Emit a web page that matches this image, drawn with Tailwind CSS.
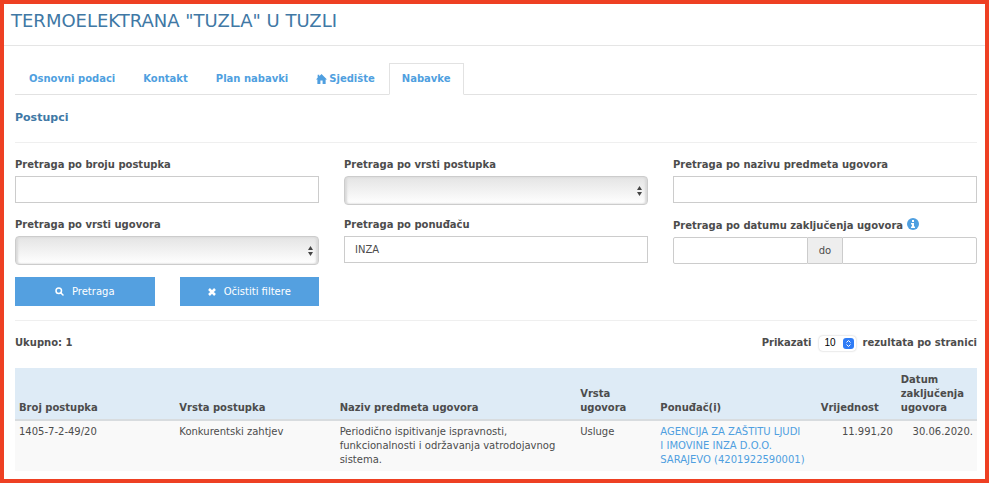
<!DOCTYPE html>
<html lang="bs">
<head>
    <meta charset="UTF-8">
    <meta name="viewport" content="width=device-width, initial-scale=1.0">
    <title>Termoelektrana "Tuzla" u Tuzli - Nabavke</title>
    <script src="https://cdn.jsdelivr.net/npm/@tailwindcss/browser@4"></script>
</head>
<body class="bg-white font-['Verdana','DejaVu_Sans',sans-serif] text-[10px] leading-[14px] text-[#4c4c4c]">

    <div class="min-h-screen mr-px border-4 border-[#ee4023]">
        <header class="px-[7px] pt-[2px] pb-[10px] border-b border-[#e5e5e5]">
            <h1 class="text-[18px] leading-[29px] text-[#4078a5]">TERMOELEKTRANA "TUZLA" U TUZLI</h1>
        </header>

        <main class="pl-[11px] pr-2 pt-[17px] pb-2">
            <nav class="flex border-b border-[#e2e2e2] font-bold text-[#4f9fe0]">
                <a href="#" class="px-[13px] pt-2 pb-[7px] border border-transparent">Osnovni podaci</a>
                <a href="#" class="px-[13px] pt-2 pb-[7px] border border-transparent">Kontakt</a>
                <a href="#" class="px-[13px] pt-2 pb-[7px] border border-transparent">Plan nabavki</a>
                <a href="#" class="px-[13px] pt-2 pb-[7px] border border-transparent flex items-center gap-[2px]">
                    <svg class="w-[11px] h-[11px]" viewBox="0 0 20 20" fill="currentColor"><path d="M10 0L20 10H17.500V18H12V12H8V18H2.500V10H0L3 7V1.500H6V4Z"/></svg>
                    Sjedište
                </a>
                <a href="#" class="px-3 pt-2 pb-[7px] -mb-px border border-b-white border-[#e2e2e2] bg-white">Nabavke</a>
            </nav>

            <h2 class="pt-4 pb-[17px] text-[11px] font-bold text-[#4078a5] border-b border-[#efefef]">Postupci</h2>

            <form class="pt-[15px]" onsubmit="return false">
                <div class="grid grid-cols-3 gap-x-[25px] gap-y-[13px]">
                    <div>
                        <label for="broj" class="block mb-1 font-bold">Pretraga po broju postupka</label>
                        <input id="broj" type="text" class="block w-full h-[27px] px-[10px] border border-[#cccccc]">
                    </div>
                    <div>
                        <label for="vrstaPostupka" class="block mb-1 font-bold">Pretraga po vrsti postupka</label>
                        <div class="relative">
                            <select id="vrstaPostupka" class="block w-full h-[29px] appearance-none rounded border border-[#cccccc] bg-linear-to-b from-[#e4e4e4] to-white shadow-[inset_2px_0_2px_#dadada,inset_-2px_0_2px_#dadada]"><option></option></select>
                            <svg class="absolute right-[6px] top-[10px] w-[5px] h-[10px] pointer-events-none" viewBox="0 0 5 10" fill="#444444"><path d="M2.500 0L5 4H0ZM0 6H5L2.500 10Z"/></svg>
                        </div>
                    </div>
                    <div>
                        <label for="naziv" class="block mb-1 font-bold">Pretraga po nazivu predmeta ugovora</label>
                        <input id="naziv" type="text" class="block w-full h-[27px] px-[10px] border border-[#cccccc]">
                    </div>
                    <div>
                        <label for="vrstaUgovora" class="block mb-1 font-bold">Pretraga po vrsti ugovora</label>
                        <div class="relative">
                            <select id="vrstaUgovora" class="block w-full h-[29px] appearance-none rounded border border-[#cccccc] bg-linear-to-b from-[#e4e4e4] to-white shadow-[inset_2px_0_2px_#dadada,inset_-2px_0_2px_#dadada]"><option></option></select>
                            <svg class="absolute right-[6px] top-[10px] w-[5px] h-[10px] pointer-events-none" viewBox="0 0 5 10" fill="#444444"><path d="M2.500 0L5 4H0ZM0 6H5L2.500 10Z"/></svg>
                        </div>
                    </div>
                    <div>
                        <label for="ponudjac" class="block mb-1 font-bold">Pretraga po ponuđaču</label>
                        <input id="ponudjac" type="text" value="INZA" class="block w-full h-[27px] px-[10px] border border-[#cccccc]">
                    </div>
                    <div>
                        <div class="flex gap-1 mb-1 h-[15px]">
                            <label for="datumOd" class="font-bold pt-px">Pretraga po datumu zaključenja ugovora</label>
                            <svg class="w-3 h-3 shrink-0" viewBox="0 0 12 12"><circle cx="6" cy="6" r="6" fill="#4f9fe0"/><path d="M5 2H7V4H5ZM4 5H7V8.500H8V10H4V8.500H5V6.500H4Z" fill="white"/></svg>
                        </div>
                        <div class="flex h-[27px]">
                            <input id="datumOd" type="text" class="flex-1 min-w-0 px-[10px] border border-[#cccccc] rounded-l-xs">
                            <span class="w-[34px] flex items-center justify-center border-y border-[#cccccc] bg-[#eeeeee]">do</span>
                            <input id="datumDo" type="text" aria-label="Datum do" class="flex-1 min-w-0 px-[10px] border border-[#cccccc] rounded-r-xs">
                        </div>
                    </div>
                </div>

                <div class="grid grid-cols-3 gap-x-[25px] pt-3 pb-[14px] border-b border-[#efefef]">
                    <div class="grid grid-cols-2 gap-x-[25px] text-white">
                        <button type="submit" class="h-[29px] flex items-center justify-center gap-2 bg-[#54a0e0]">
                            <svg class="w-[9px] h-[9px]" viewBox="0 0 18 18" fill="none" stroke="currentColor" stroke-width="3"><circle cx="7.500" cy="7.500" r="5.500"/><path d="M11.500 11.500L16 16" stroke-linecap="round"/></svg>
                            Pretraga
                        </button>
                        <button type="reset" class="h-[29px] flex items-center justify-center gap-2 bg-[#54a0e0]">
                            <svg class="w-2 h-2" viewBox="0 0 16 16" stroke="currentColor" stroke-width="5"><path d="M2 2L14 14M14 2L2 14"/></svg>
                            Očistiti filtere
                        </button>
                    </div>
                </div>
            </form>

            <div class="flex items-center justify-between h-[14px] mt-[15px] mb-[18px] font-bold">
                <p>Ukupno: 1</p>
                <div class="flex items-center gap-[7px]">
                    <label for="poStranici">Prikazati</label>
                    <div class="relative">
                        <select id="poStranici" class="block w-[37px] h-[15px] pl-[6px] appearance-none rounded-sm bg-white font-['Liberation_Sans',sans-serif] font-normal text-[10px] text-black shadow-[0_0_2px_#bbbbbb]"><option>10</option></select>
                        <svg class="absolute right-[2px] top-[2px] w-[11px] h-[11px] pointer-events-none" viewBox="0 0 11 11" fill="none" stroke="white"><rect width="11" height="11" rx="3" fill="#2f7cf6" stroke="none"/><path d="M3.500 4.500L5.500 2.500L7.500 4.500M3.500 6.500L5.500 8.500L7.500 6.500"/></svg>
                    </div>
                    <span>rezultata po stranici</span>
                </div>
            </div>

            <table class="w-full table-fixed text-left">
                <colgroup>
                    <col class="w-2/12"><col class="w-2/12"><col class="w-3/12"><col class="w-1/12"><col class="w-2/12"><col class="w-1/12"><col class="w-1/12">
                </colgroup>
                <thead class="bg-[#deebf6] align-bottom border-b-2 border-[#d8dcdf]">
                    <tr>
                        <th class="px-1 pt-[5px] pb-1">Broj postupka</th>
                        <th class="px-1 pt-[5px] pb-1">Vrsta postupka</th>
                        <th class="px-1 pt-[5px] pb-1">Naziv predmeta ugovora</th>
                        <th class="px-1 pt-[5px] pb-1">Vrsta ugovora</th>
                        <th class="px-1 pt-[5px] pb-1">Ponuđač(i)</th>
                        <th class="px-1 pt-[5px] pb-1">Vrijednost</th>
                        <th class="px-1 pt-[5px] pb-1">Datum zaključenja ugovora</th>
                    </tr>
                </thead>
                <tbody class="bg-[#f9f9f9] align-top">
                    <tr>
                        <td class="px-1 py-1">1405-7-2-49/20</td>
                        <td class="px-1 py-1">Konkurentski zahtjev</td>
                        <td class="px-1 py-1">Periodično ispitivanje ispravnosti, funkcionalnosti i održavanja vatrodojavnog sistema.</td>
                        <td class="px-1 py-1">Usluge</td>
                        <td class="px-1 py-1"><a href="#" class="text-[#4f9fe0]">AGENCIJA ZA ZAŠTITU LJUDI I&nbsp;IMOVINE INZA D.O.O. SARAJEVO (4201922590001)</a></td>
                        <td class="px-1 py-1 text-right">11.991,20</td>
                        <td class="px-1 py-1 text-right">30.06.2020.</td>
                    </tr>
                </tbody>
            </table>
        </main>
    </div>

</body>
</html>
